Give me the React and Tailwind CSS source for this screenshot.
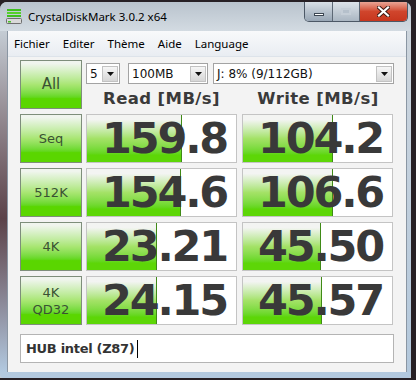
import React from 'react';

const rows = [
  { label: ['Seq'], read: '159.8', rw: 95, write: '104.2', ww: 90 },
  { label: ['512K'], read: '154.6', rw: 94, write: '106.6', ww: 90 },
  { label: ['4K'], read: '23.21', rw: 70, write: '45.50', ww: 78 },
  { label: ['4K', 'QD32'], read: '24.15', rw: 70, write: '45.57', ww: 79 },
];

const menu = ['Fichier', 'Editer', 'Thème', 'Aide', 'Language'];

const AppIcon = () => (
  <svg width="17" height="17" viewBox="0 0 17 17">
    <rect x="1" y="1" width="14" height="2" fill="#3fbf1f" />
    <rect x="1" y="4" width="14" height="2" fill="#56d12c" />
    <rect x="1" y="7" width="14" height="2" fill="#3fbf1f" />
    <rect x="0.5" y="10.5" width="15" height="5" rx="1" fill="#d9d9d9" stroke="#6f6f6f" />
    <rect x="2" y="13" width="3" height="1.5" fill="#49c12a" />
  </svg>
);

const Arrow = () => (
  <div className="ml-auto mr-[1px] flex h-[16px] w-[16px] items-center justify-center border border-[#c2c2c2] bg-linear-to-b from-[#f6f6f6] to-[#d6d6d6]">
    <svg width="7" height="4" viewBox="0 0 7 4">
      <path d="M0 0h7L3.5 4z" fill="#111" />
    </svg>
  </div>
);

const Select = ({ className, text }) => (
  <div className={`flex h-[21px] items-center border border-[#a3a3a3] bg-white pl-[3px] text-[12px] text-[#111] ${className}`}>
    <span className="leading-none">{text}</span>
    <Arrow />
  </div>
);

const GreenButton = ({ children, className }) => (
  <div className={`flex h-[49px] w-[62px] flex-col items-center justify-center border border-[#7e8e7b] bg-linear-to-b from-[#f0f5ee] from-5% via-[#a9e673] via-50% to-[#5ad600] to-80% leading-[17px] text-[#3a5233] ${className}`}>
    {children}
  </div>
);

const Cell = ({ value, fill }) => (
  <div className="relative flex h-[49px] items-center justify-end overflow-hidden border border-[#c4c4c4] bg-white pr-[9px]">
    <div
      className="absolute inset-y-0 left-0 border-r border-[#3f8a17] bg-linear-to-b from-[#f3f4f2] from-10% via-[#a4e267] via-50% to-[#5dd607] to-85%"
      style={{ width: fill }}
    />
    <span className="relative text-[43px] font-bold leading-none tracking-[-2.2px] text-[#393939]">{value}</span>
  </div>
);

export default function App() {
  return (
    <div className="h-[380px] w-[416px] overflow-hidden bg-[#272025] pt-[2px] font-['DejaVu_Sans',sans-serif]">
      <div className="flex h-[376px] w-[411px] flex-col overflow-hidden rounded-t-[7px] bg-[#c3ccd5]">
        {/* title bar */}
        <div className="relative flex h-[29px] items-center bg-linear-to-b from-[#b9c3cd] to-[#d3dbe2] pl-[6px]">
          <AppIcon />
          <span className="ml-[5px] font-['Noto_Sans',sans-serif] text-[11.5px] text-black">CrystalDiskMark 3.0.2 x64</span>
          <div className="absolute right-[3px] top-0 flex h-[20px] overflow-hidden rounded-b-[5px] border border-t-0 border-[#4c5866]">
            <div className="flex w-[28px] items-center justify-center border-r border-[#5d6875] bg-linear-to-b from-[#d9e0e7] to-[#98a6b5]">
              <div className="mt-[5px] h-[3px] w-[10px] border border-[#3c4652] bg-white" />
            </div>
            <div className="flex w-[27px] items-center justify-center border-r border-[#5d6875] bg-linear-to-b from-[#dde3e9] to-[#aab6c2]">
              <div className="h-[7px] w-[10px] border-2 border-[#c5ced7] bg-[#b5c0cb]" />
            </div>
            <div className="flex w-[47px] items-center justify-center bg-linear-to-b from-[#e9a495] via-[#d0452c] via-50% to-[#c7361e]">
              <svg width="13" height="11" viewBox="0 0 13 11">
                <path d="M2 1.5l9 8M11 1.5l-9 8" stroke="#3b1a14" strokeWidth="4" strokeLinecap="square" />
                <path d="M2 1.5l9 8M11 1.5l-9 8" stroke="#fff" strokeWidth="2.2" strokeLinecap="square" />
              </svg>
            </div>
          </div>
        </div>

        <div className="flex flex-1">
          {/* left frame */}
          <div className="w-[8px] border-r border-[#8a96a3] bg-linear-to-b from-[#c4ccd4] via-[#5b4249] via-55% to-[#b2c9e0]" />

          {/* client area */}
          <div className="flex w-[398px] flex-col bg-[#f3f3f3]">
            <div className="flex h-[26px] items-center border-b border-[#dde3ea] bg-linear-to-b from-[#f8f9fb] to-[#e9edf2] pl-[6px] font-['Noto_Sans',sans-serif] text-[11.5px] text-black">
              {menu.map((m) => (
                <span key={m} className="mr-[13px]">{m}</span>
              ))}
            </div>

            <div className="flex flex-col gap-[5px] px-[12px] pt-[3px]">
              {/* top row */}
              <div className="flex gap-[4px]">
                <GreenButton className="text-[15px]">All</GreenButton>
                <div className="flex w-[308px] flex-col pt-[3px]">
                  <div className="flex">
                    <Select className="w-[34px]" text="5" />
                    <Select className="ml-[8px] w-[80px]" text="100MB" />
                    <Select className="ml-[5px] w-[181px]" text="J: 8% (9/112GB)" />
                  </div>
                  <div className="flex pt-[5px] text-[16.5px] font-bold leading-[20px] text-[#3a3a3a]">
                    <div className="w-[151px] text-center tracking-[0.4px]">Read [MB/s]</div>
                    <div className="ml-[5px] w-[152px] text-center tracking-[0.4px]">Write [MB/s]</div>
                  </div>
                </div>
              </div>

              {rows.map((r) => (
                <div key={r.read} className="grid grid-cols-[62px_151px_152px] gap-x-[4px]">
                  <GreenButton className="text-[13px]">
                    {r.label.map((l) => (
                      <span key={l}>{l}</span>
                    ))}
                  </GreenButton>
                  <Cell value={r.read} fill={r.rw} />
                  <div className="ml-[1px]">
                    <Cell value={r.write} fill={r.ww} />
                  </div>
                </div>
              ))}

              <div className="mt-[4px] flex h-[29px] items-center border border-[#b4b4b4] bg-white pl-[5px] text-[13px] font-bold tracking-[-0.3px] text-[#333]">
                HUB intel (Z87)
                <span className="ml-[2px] h-[18px] w-px bg-black" />
              </div>
            </div>
          </div>

          {/* right frame */}
          <div className="w-[5px] border-l border-[#8a96a3] bg-linear-to-b from-[#cdd5dd] to-[#b3c8dc]" />
        </div>

        {/* bottom frame */}
        <div className="h-[6px] rounded-b-[4px] bg-[#b3c9df]" />
      </div>
    </div>
  );
}
